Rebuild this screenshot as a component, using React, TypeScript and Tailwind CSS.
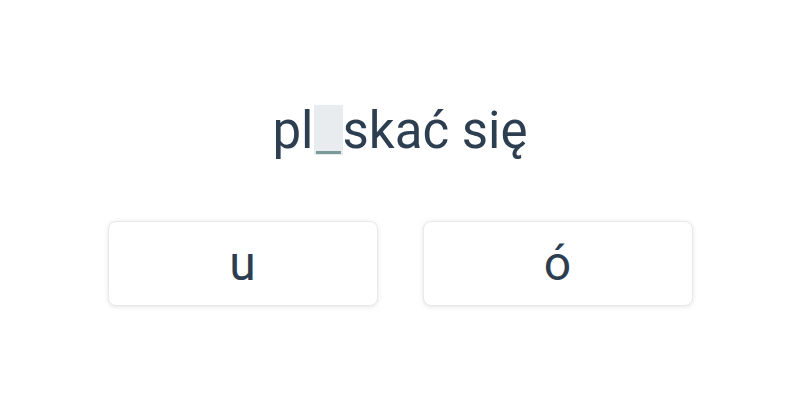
export default function App() {
  return (
    <div className="w-[800px] h-[400px] bg-white flex flex-col items-center" style={{ fontFamily: "Roboto, sans-serif" }}>
      <div className="mt-[102px] h-[56px] flex items-center text-[51px] text-[#2c3e50] leading-none">
        <span>pl</span>
        <span className="inline-block w-[29px] h-[50px] bg-[#e9ecef] relative">
          <span className="absolute left-[2px] right-[2px] bottom-[1px] h-[3px] bg-[#7d9a9a]"></span>
        </span>
        <span>skać się</span>
      </div>
      <div className="mt-[63px] flex gap-[45px]">
        <button className="w-[270px] h-[85px] rounded-lg border border-[#e8e8e8] bg-white shadow-[0_1px_5px_rgba(0,0,0,0.1)] text-[48px] text-[#2c3e50] leading-none">u</button>
        <button className="w-[270px] h-[85px] rounded-lg border border-[#e8e8e8] bg-white shadow-[0_1px_5px_rgba(0,0,0,0.1)] text-[48px] text-[#2c3e50] leading-none">ó</button>
      </div>
    </div>
  );
}
